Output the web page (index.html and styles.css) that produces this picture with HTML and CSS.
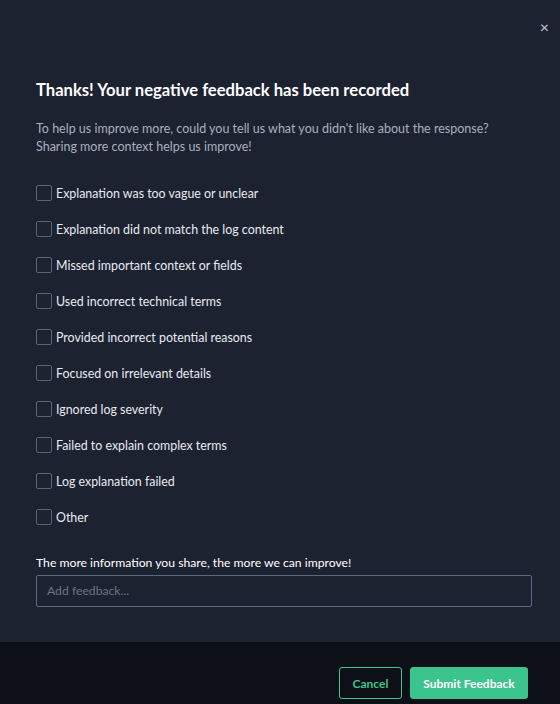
FILE: index.html
```html
<!DOCTYPE html>
<html lang="en">
<head>
    <meta charset="UTF-8">
    <meta name="viewport" content="width=device-width, initial-scale=1.0">
    <title>Feedback</title>
    <link rel="stylesheet" href="styles.css">
</head>
<body>
    <div class="modal">
        <div class="modal-body">
            <div class="close">&times;</div>
            <h2 class="title">Thanks! Your negative feedback has been recorded</h2>
            <p class="desc">To help us improve more, could you tell us what you didn't like about the response?<br>Sharing more context helps us improve!</p>
            <ul class="options">
                <li><span class="box"></span>Explanation was too vague or unclear</li>
                <li><span class="box"></span>Explanation did not match the log content</li>
                <li><span class="box"></span>Missed important context or fields</li>
                <li><span class="box"></span>Used incorrect technical terms</li>
                <li><span class="box"></span>Provided incorrect potential reasons</li>
                <li><span class="box"></span>Focused on irrelevant details</li>
                <li><span class="box"></span>Ignored log severity</li>
                <li><span class="box"></span>Failed to explain complex terms</li>
                <li><span class="box"></span>Log explanation failed</li>
                <li><span class="box"></span>Other</li>
            </ul>
            <label class="more">The more information you share, the more we can improve!</label>
            <div class="input">Add feedback...</div>
        </div>
        <div class="modal-foot">
            <button class="btn cancel">Cancel</button>
            <button class="btn submit">Submit Feedback</button>
        </div>
    </div>
</body>
</html>
```

FILE: styles.css
```css
*{
    margin:0;
    padding:0;
    list-style:none;
    box-sizing:border-box;
}
body{
    background-color:#1d2230;
    font-family:"Lato","Noto Sans",sans-serif;
    color:#fff;
}
.modal{
    width:560px;
    height:704px;
    display:flex;
    flex-direction:column;
}
.modal-body{
    position:relative;
    flex:1;
    padding:78px 28px 0 36px;
}
.close{
    position:absolute;
    top:17px;
    right:11px;
    font-size:16px;
    color:#c3c9d6;
}
.title{
    font-size:16.6px;
    font-weight:700;
    line-height:24px;
}
.desc{
    margin-top:18px;
    font-size:12.5px;
    line-height:18px;
    color:#a9b0bf;
}
.options{
    margin-top:19px;
}
.options li{
    display:flex;
    align-items:center;
    height:36px;
    font-size:12.4px;
    color:#e8ebf0;
}
.box{
    width:16px;
    height:16px;
    border:1px solid #5a6477;
    border-radius:2px;
    margin-right:4px;
}
.more{
    display:block;
    margin-top:20px;
    font-size:12.2px;
    line-height:16px;
}
.input{
    margin-top:4px;
    width:496px;
    height:32px;
    border:1px solid #5a6884;
    border-radius:2px;
    padding:0 10px;
    font-size:12.2px;
    line-height:30px;
    color:#6b7488;
}
.modal-foot{
    height:62px;
    background-color:#0d1117;
    display:flex;
    justify-content:flex-end;
    align-items:flex-start;
    gap:8px;
    padding:25px 32px 0 0;
}
.btn{
    height:32px;
    border-radius:3px;
    font-family:inherit;
    font-size:12px;
    font-weight:700;
    padding:0 12px;
}
.cancel{
    background:none;
    border:1px solid #3cc48e;
    color:#3cc48e;
    width:63px;
}
.submit{
    background-color:#3cc48e;
    border:1px solid #3cc48e;
    color:#fff;
    width:118px;
}
```
